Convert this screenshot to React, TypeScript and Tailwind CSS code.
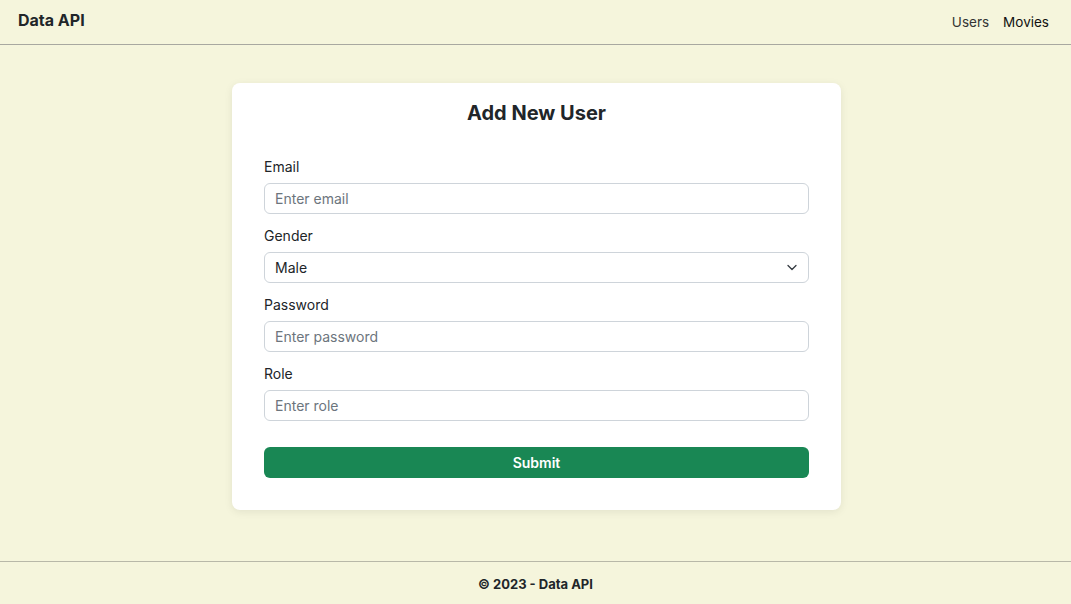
import React from "react";

function Field({ label, placeholder }: { label: string; placeholder: string }) {
  return (
    <div className="mb-3">
      <label className="block text-[14px] leading-[20px] text-[#212529] mb-[6px]">{label}</label>
      <input
        className="block w-full h-[31px] rounded-[6px] border border-[#ced4da] bg-white px-[10px] text-[14px] text-[#212529] placeholder:text-[#6c757d] outline-none"
        placeholder={placeholder}
      />
    </div>
  );
}

export default function App() {
  return (
    <div className="min-h-screen flex flex-col bg-[#f5f5dc] text-[#212529]" style={{ fontFamily: "Inter, 'Open Sans', sans-serif" }}>
      <nav className="h-[45px] flex items-center justify-between pl-[18px] pr-[22px] border-b border-[#a8a8a0]">
        <span className="text-[16px] font-bold pb-[4px]">Data API</span>
        <div className="flex items-center gap-[14px] text-[13.5px]">
          <span className="text-[#333]">Users</span>
          <span className="text-[#111]">Movies</span>
        </div>
      </nav>
      <main className="flex-1 flex justify-center pt-[38px] pl-[2px]">
        <div className="w-[609px] h-[427px] bg-white rounded-[8px] shadow-[0_2px_8px_rgba(0,0,0,0.08)] px-[32px]">
          <div className="pt-[16px]">
            <h1 className="text-center text-[20px] leading-[28px] font-bold mb-[30px]">Add New User</h1>
            <Field label="Email" placeholder="Enter email" />
            <div className="mb-3">
              <label className="block text-[14px] leading-[20px] text-[#212529] mb-[6px]">Gender</label>
              <div className="relative">
                <select className="block w-full h-[31px] appearance-none rounded-[6px] border border-[#ced4da] bg-white px-[10px] text-[14px] text-[#212529] outline-none">
                  <option>Male</option>
                  <option>Female</option>
                </select>
                <svg className="absolute right-[11px] top-[11px]" width="12" height="9" viewBox="0 0 12 9" fill="none" stroke="#343a40" strokeWidth="1.3" strokeLinecap="round" strokeLinejoin="round">
                  <path d="M2 2.5 6 6.5 10 2.5" />
                </svg>
              </div>
            </div>
            <Field label="Password" placeholder="Enter password" />
            <Field label="Role" placeholder="Enter role" />
            <button className="mt-[14px] w-full h-[31px] rounded-[6px] bg-[#198754] text-white text-[14px] font-semibold">Submit</button>
          </div>
        </div>
      </main>
      <footer className="h-[43px] border-t border-[#b8b8a8] flex items-center justify-center pt-[3px] text-[13px] font-bold">
        © 2023 - Data API
      </footer>
    </div>
  );
}
